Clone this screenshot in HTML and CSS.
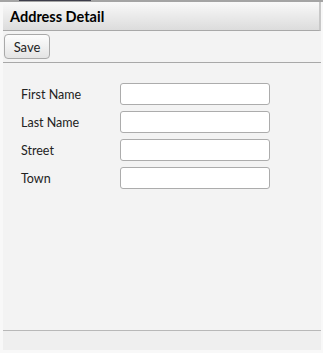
FILE: index.html
```html
<!DOCTYPE html>
<html lang="en">
<head>
    <meta charset="UTF-8">
    <title>Address Detail</title>
    <link rel="stylesheet" href="styles.css">
</head>
<body>
    <div class="window">
        <div class="topBar"><span class="tab"></span></div>
        <div class="header">Address Detail</div>
        <div class="toolbar">
            <button class="btn">Save</button>
        </div>
        <div class="content">
            <div class="row"><label>First Name</label><input type="text"></div>
            <div class="row"><label>Last Name</label><input type="text"></div>
            <div class="row"><label>Street</label><input type="text"></div>
            <div class="row"><label>Town</label><input type="text"></div>
        </div>
        <div class="statusBar"></div>
    </div>
</body>
</html>
```
FILE: styles.css
```css
*{
    padding: 0px;
    margin: 0px;
    box-sizing: border-box;
}
body{
    background-color: #f8f8f8;
    font-family: "Lato", "Noto Sans", sans-serif;
    font-size: 12.5px;
    color: #222;
}
.window{
    width: 323px;
    height: 353px;
    display: flex;
    flex-direction: column;
    padding: 0px 2px 3px 3px;
}
.topBar{
    height: 2px;
    margin: 0px -2px 0px -3px;
    background-color: #a4a4a4;
    padding-left: 19px;
}
.topBar .tab{
    display: block;
    width: 72px;
    height: 1px;
    background-color: #3c3c4a;
}
.header{
    height: 29px;
    line-height: 29px;
    padding-left: 7px;
    font-weight: bold;
    font-size: 14.5px;
    color: #000;
    background: linear-gradient(#f9f9f9, #dcdcdc);
    border-bottom: 1px solid #a8a8a8;
    border-right: 2px solid #c8c8c8;
}
.toolbar{
    height: 32px;
    padding: 3px 0px 0px 1px;
    background-color: #f3f3f3;
    border-bottom: 1px solid #a8a8a8;
}
.btn{
    width: 46px;
    height: 25px;
    font-family: inherit;
    font-size: 13px;
    color: #222;
    border: 1px solid #a9a9a9;
    border-radius: 4px;
    background: linear-gradient(#fdfdfd, #e4e4e4);
}
.content{
    flex: 1;
    background-color: #f3f3f3;
    padding: 20px 0px 0px 18px;
    display: flex;
    flex-direction: column;
    gap: 6px;
}
.row{
    display: flex;
    align-items: center;
    height: 22px;
}
.row label{
    width: 99px;
}
.row input{
    width: 150px;
    height: 22px;
    border: 1px solid #acacac;
    border-radius: 3px;
    background-color: #fff;
}
.statusBar{
    height: 20px;
    background-color: #efefef;
    border-top: 1px solid #b8b8b8;
}
```
